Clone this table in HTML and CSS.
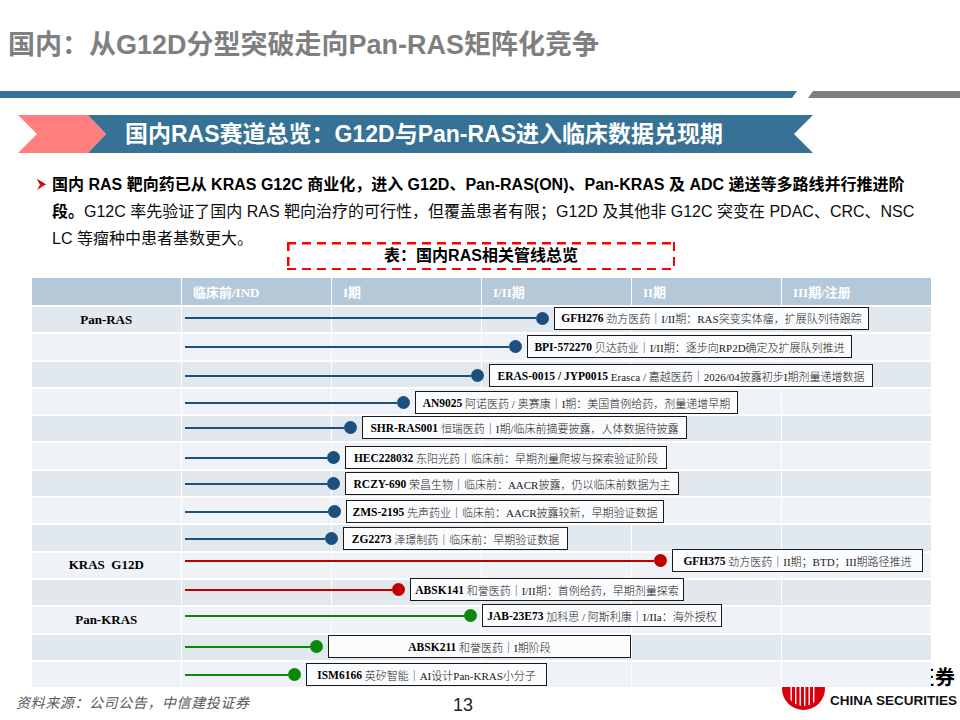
FILE: index.html
```html
<!DOCTYPE html>
<html lang="zh-CN">
<head>
<meta charset="utf-8">
<title>国内RAS赛道总览</title>
<link rel="stylesheet" href="styles.css">
</head>
<body>
<div class="page">
  <h1 class="title">国内：从G12D分型突破走向Pan-RAS矩阵化竞争</h1>
  <div class="rule"><div class="rule-blue"></div><div class="rule-gray"></div></div>
  <div class="banner">
    <div class="banner-tip"></div>
    <div class="banner-body">国内RAS赛道总览：G12D与Pan-RAS进入临床数据兑现期</div>
  </div>

  <div class="bullet">
    <span class="arrow"><svg width="9" height="11" viewBox="0 0 9 11"><polygon points="0,0 9,5.5 0,11 3,5.5" fill="#e8151b"/><polygon points="0,0 9,5.5 3,5.5" fill="#b30d12"/></svg></span>
    <p class="bullet-text"><b>国内 RAS 靶向药已从 KRAS G12C 商业化，进入 G12D、Pan-RAS(ON)、Pan-KRAS 及 ADC 递送等多路线并行推进阶<br>段。</b>G12C 率先验证了国内 RAS 靶向治疗的可行性，但覆盖患者有限；G12D 及其他非 G12C 突变在 PDAC、CRC、NSC<br>LC 等瘤种中患者基数更大。</p>
  </div>

  <div class="caption">表：国内RAS相关管线总览</div>

  <div class="table">
    <div class="row hd">
      <div class="cell"></div><div class="cell">临床前/IND</div><div class="cell">I期</div><div class="cell">I/II期</div><div class="cell">II期</div><div class="cell">III期/注册</div>
    </div>

    <div class="row odd">
      <div class="cell label">Pan-RAS</div><div class="cell"></div><div class="cell"></div><div class="cell"></div><div class="cell"></div><div class="cell"></div>
      <div class="track blue" style="--y:11px;--w:351px;--bw:315px"><i class="line"></i><i class="dot"></i><div class="box"><b>GFH276</b>&nbsp;劲方医药｜I/II期：RAS突变实体瘤，扩展队列待跟踪</div></div>
    </div>
    <div class="row even">
      <div class="cell label"></div><div class="cell"></div><div class="cell"></div><div class="cell"></div><div class="cell"></div><div class="cell"></div>
      <div class="track blue" style="--y:12.7px;--w:324px;--bw:325px"><i class="line"></i><i class="dot"></i><div class="box"><b>BPI-572270</b>&nbsp;贝达药业｜I/II期：逐步向RP2D确定及扩展队列推进</div></div>
    </div>
    <div class="row odd">
      <div class="cell label"></div><div class="cell"></div><div class="cell"></div><div class="cell"></div><div class="cell"></div><div class="cell"></div>
      <div class="track blue" style="--y:14.4px;--w:286px;--bw:384px"><i class="line"></i><i class="dot"></i><div class="box"><b>ERAS-0015 / JYP0015</b>&nbsp;Erasca / 嘉越医药｜2026/04披露初步I期剂量递增数据</div></div>
    </div>
    <div class="row even">
      <div class="cell label"></div><div class="cell"></div><div class="cell"></div><div class="cell"></div><div class="cell"></div><div class="cell"></div>
      <div class="track blue" style="--y:14px;--w:212px;--bw:323px"><i class="line"></i><i class="dot"></i><div class="box"><b>AN9025</b>&nbsp;阿诺医药 / 奥赛康｜I期：美国首例给药，剂量递增早期</div></div>
    </div>
    <div class="row odd">
      <div class="cell label"></div><div class="cell"></div><div class="cell"></div><div class="cell"></div><div class="cell"></div><div class="cell"></div>
      <div class="track blue" style="--y:11.8px;--w:159px;--bw:325px"><i class="line"></i><i class="dot"></i><div class="box"><b>SHR-RAS001</b>&nbsp;恒瑞医药｜I期/临床前摘要披露，人体数据待披露</div></div>
    </div>
    <div class="row even">
      <div class="cell label"></div><div class="cell"></div><div class="cell"></div><div class="cell"></div><div class="cell"></div><div class="cell"></div>
      <div class="track blue" style="--y:14.5px;--w:142px;--bw:322px"><i class="line"></i><i class="dot"></i><div class="box"><b>HEC228032</b>&nbsp;东阳光药｜临床前：早期剂量爬坡与探索验证阶段</div></div>
    </div>
    <div class="row odd">
      <div class="cell label"></div><div class="cell"></div><div class="cell"></div><div class="cell"></div><div class="cell"></div><div class="cell"></div>
      <div class="track blue" style="--y:13.2px;--w:142px;--bw:334px"><i class="line"></i><i class="dot"></i><div class="box"><b>RCZY-690</b>&nbsp;荣昌生物｜临床前：AACR披露，仍以临床前数据为主</div></div>
    </div>
    <div class="row even">
      <div class="cell label"></div><div class="cell"></div><div class="cell"></div><div class="cell"></div><div class="cell"></div><div class="cell"></div>
      <div class="track blue" style="--y:13.9px;--w:143px;--bw:318px"><i class="line"></i><i class="dot"></i><div class="box"><b>ZMS-2195</b>&nbsp;先声药业｜临床前：AACR披露较新，早期验证数据</div></div>
    </div>
    <div class="row odd">
      <div class="cell label"></div><div class="cell"></div><div class="cell"></div><div class="cell"></div><div class="cell"></div><div class="cell"></div>
      <div class="track blue" style="--y:13.6px;--w:140px;--bw:225px"><i class="line"></i><i class="dot"></i><div class="box"><b>ZG2273</b>&nbsp;泽璟制药｜临床前：早期验证数据</div></div>
    </div>
    <div class="row even">
      <div class="cell label">KRAS&nbsp; G12D</div><div class="cell"></div><div class="cell"></div><div class="cell"></div><div class="cell"></div><div class="cell"></div>
      <div class="track red" style="--y:8.3px;--w:469px;--bw:251px"><i class="line"></i><i class="dot"></i><div class="box"><b>GFH375</b>&nbsp;劲方医药｜II期；BTD；III期路径推进</div></div>
    </div>
    <div class="row odd">
      <div class="cell label"></div><div class="cell"></div><div class="cell"></div><div class="cell"></div><div class="cell"></div><div class="cell"></div>
      <div class="track red" style="--y:10px;--w:207px;--bw:274px"><i class="line"></i><i class="dot"></i><div class="box"><b>ABSK141</b>&nbsp;和誉医药｜I/II期：首例给药，早期剂量探索</div></div>
    </div>
    <div class="row even">
      <div class="cell label">Pan-KRAS</div><div class="cell"></div><div class="cell"></div><div class="cell"></div><div class="cell"></div><div class="cell"></div>
      <div class="track green" style="--y:8.7px;--w:279px;--bw:240px"><i class="line"></i><i class="dot"></i><div class="box"><b>JAB-23E73</b>&nbsp;加科思 / 阿斯利康｜I/IIa：海外授权</div></div>
    </div>
    <div class="row odd">
      <div class="cell label"></div><div class="cell"></div><div class="cell"></div><div class="cell"></div><div class="cell"></div><div class="cell"></div>
      <div class="track green" style="--y:12.4px;--w:125px;--bw:303px"><i class="line"></i><i class="dot"></i><div class="box"><b>ABSK211</b>&nbsp;和誉医药｜I期阶段</div></div>
    </div>
    <div class="row even">
      <div class="cell label"></div><div class="cell"></div><div class="cell"></div><div class="cell"></div><div class="cell"></div><div class="cell"></div>
      <div class="track green" style="--y:13.1px;--w:103px;--bw:241px"><i class="line"></i><i class="dot"></i><div class="box"><b>ISM6166</b>&nbsp;英矽智能｜AI设计Pan-KRAS小分子</div></div>
    </div>
  </div>

  <footer class="foot">
    <div class="source">资料来源：公司公告，中信建投证券</div>
    <div class="pageno">13</div>
  </footer>

  <div class="logo">
    <svg viewBox="0 0 43 43" aria-hidden="true">
      <defs><clipPath id="inner"><circle cx="21.5" cy="21.5" r="17.5"/></clipPath></defs>
      <circle cx="21.5" cy="21.5" r="21.5" fill="#d8000f"/>
      <g clip-path="url(#inner)" fill="#fff">
        <rect x="8.5" y="0" width="1.4" height="43"/>
        <rect x="13" y="0" width="1.4" height="43"/>
        <rect x="17.5" y="0" width="1.4" height="43"/>
        <rect x="22" y="0" width="1.4" height="43"/>
        <rect x="26.5" y="0" width="1.4" height="43"/>
        <rect x="31" y="0" width="1.4" height="43"/>
      </g>
    </svg>
    <div class="logo-text">
      <div class="logo-cn">中信建投证券</div>
      <div class="logo-en">CHINA SECURITIES</div>
    </div>
  </div>
</div>
</body>
</html>
```
FILE: styles.css
```css
* { box-sizing: border-box; margin: 0; padding: 0; }

body {
  background: #fff;
  font-family: "Liberation Sans", "Noto Sans CJK SC", sans-serif;
  color: #000;
}

.page {
  position: relative;
  width: 960px;
  height: 720px;
  overflow: hidden;
}

/* ---------- header ---------- */
.title {
  font-size: 27px;
  font-weight: 700;
  color: #7f7f7f;
  line-height: 36px;
  padding: 27px 0 0 8px;
  white-space: nowrap;
}

.rule {
  display: flex;
  height: 7px;
  margin-top: 28px;
}
.rule-blue {
  width: 797px;
  background: #367196;
  clip-path: polygon(0 0, 100% 0, calc(100% - 5px) 100%, 0 100%);
}
.rule-gray {
  flex: 1;
  margin-left: 11px;
  background: #7f7f7f;
  clip-path: polygon(5px 0, 100% 0, 100% 100%, 0 100%);
}

.banner {
  display: flex;
  height: 38px;
  margin-top: 17px;
}
.banner-tip {
  flex: none;
  width: 88px;
  margin-left: 18px;
  background: #ff7f7f;
  clip-path: polygon(0 0, 70px 0, 100% 50%, 70px 100%, 0 100%, 19px 50%);
}
.banner-body {
  flex: none;
  width: 725px;
  margin-left: -18px;
  background: #367196;
  clip-path: polygon(0 0, 100% 0, calc(100% - 19px) 50%, 100% 100%, 0 100%, 18px 50%);
  color: #fff;
  font-size: 23px;
  font-weight: 700;
  line-height: 38px;
  padding-left: 37px;
  white-space: nowrap;
}

/* ---------- bullet ---------- */
.bullet {
  display: flex;
  margin-top: 17.5px;
  padding-left: 37px;
}
.arrow {
  flex: none;
  width: 15px;
  height: 27px;
  display: flex;
  align-items: center;
}
.arrow svg { display: block; }
.bullet-text {
  font-size: 16px;
  line-height: 27px;
  white-space: nowrap;
  color: #0d0d0d;
}
.bullet-text b { font-weight: 700; color: #000; }

/* ---------- caption ---------- */
.caption {
  position: relative;
  margin: -9.5px 0 0 287px;
  width: 388px;
  height: 28px;
  text-align: center;
  font-size: 16px;
  font-weight: 700;
  line-height: 28px;
  background:
    repeating-linear-gradient(90deg, #f00 0 9px, transparent 9px 15px) left top / 100% 2.5px no-repeat,
    repeating-linear-gradient(90deg, #f00 0 9px, transparent 9px 15px) left bottom / 100% 2.5px no-repeat,
    repeating-linear-gradient(180deg, #f00 0 9px, transparent 9px 15px) left top / 2.5px 100% no-repeat,
    repeating-linear-gradient(180deg, #f00 0 9px, transparent 9px 15px) right top / 2.5px 100% no-repeat;
}

/* ---------- table ---------- */
.table {
  position: relative;
  z-index: 1;
  margin: 8px 0 0 32px;
  width: 898.5px;
  display: grid;
  row-gap: 2px;
  background: #fff;
  font-family: "Liberation Serif", "Noto Sans CJK SC", serif;
}
.row {
  position: relative;
  display: grid;
  grid-template-columns: repeat(6, 148.5px);
  column-gap: 1.5px;
  height: 25.3px;
}
.row.hd { height: 27px; }
.hd .cell {
  background: #b4c8d8;
  color: #fff;
  font-weight: 700;
  font-size: 13px;
  padding-left: 11px;
  display: flex;
  align-items: center;
}
.row.odd .cell { background: #e2e9ee; }
.row.even .cell { background: #eff3f7; }
.label {
  display: flex;
  align-items: center;
  justify-content: center;
  font-weight: 700;
  font-size: 13px;
  color: #000;
  white-space: nowrap;
}

.track {
  position: absolute;
  z-index: 2;
  left: 153px;
  top: var(--y);
  height: 0;
  display: flex;
  align-items: center;
}
.track.blue { color: #1b4f7d; }
.track.red { color: #c00000; }
.track.green { color: #0a880a; }
.line {
  flex: none;
  width: var(--w);
  height: 2.5px;
  background: currentColor;
}
.dot {
  flex: none;
  width: 13px;
  height: 13px;
  border-radius: 50%;
  background: currentColor;
}
.box {
  flex: none;
  margin-left: 5px;
  width: var(--bw);
  height: 23px;
  border: 1.5px solid currentColor;
  background: #fbfcfd;
  display: flex;
  align-items: center;
  justify-content: center;
  white-space: nowrap;
  font-size: 11px;
  font-weight: 300;
  color: #1a1a1a;
}
.box b { font-weight: 700; font-size: 11.5px; color: #000; }

/* ---------- footer ---------- */
.foot {
  display: flex;
  margin-top: 4px;
  height: 26px;
}
.source {
  margin-left: 16px;
  width: 437px;
  font-family: "Noto Sans CJK SC", sans-serif;
  font-size: 14px;
  font-style: italic;
  letter-spacing: 0.6px;
  line-height: 22px;
  color: #595959;
  white-space: nowrap;
}
.pageno {
  font-family: "Liberation Sans", sans-serif;
  font-size: 18px;
  line-height: 22px;
  padding-top: 3px;
  color: #222;
}

.logo {
  position: absolute;
  z-index: 0;
  left: 782px;
  top: 666px;
  display: flex;
}
.logo svg {
  flex: none;
  width: 43px;
  height: 43px;
  margin-top: 1px;
}
.logo-text { margin-left: 5px; }
.logo-cn {
  font-family: "Noto Sans CJK SC", sans-serif;
  font-size: 20px;
  font-weight: 700;
  letter-spacing: 1px;
  line-height: 22px;
  white-space: nowrap;
}
.logo-en {
  margin-top: 6px;
  font-size: 13.5px;
  font-weight: 700;
  line-height: 14px;
  white-space: nowrap;
  color: #111;
}
```
